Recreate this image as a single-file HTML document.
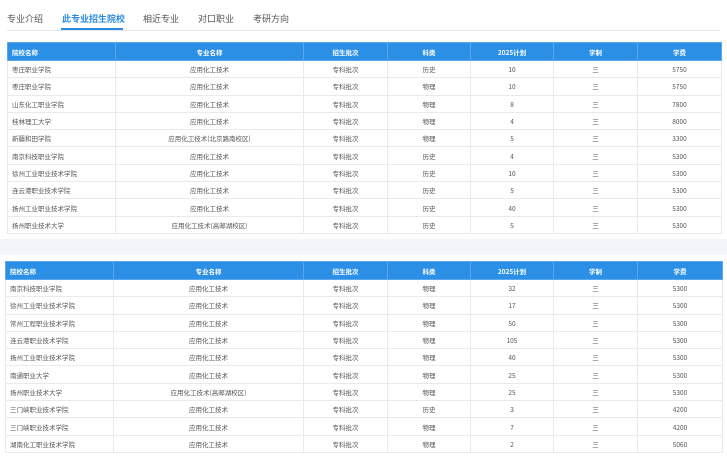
<!DOCTYPE html>
<html><head><meta charset="utf-8"><style>
body{margin:0;width:727px;height:457px;background:#f3f5fa;font-family:"Liberation Sans","Noto Sans CJK SC",sans-serif;position:relative;overflow:hidden}
.card{position:absolute;background:#fff}
.tabs{position:absolute;top:9px;left:0;height:21px;width:727px;font-size:9px;color:#555}
.tabs span{position:absolute;top:3px}
.tabs .act{color:#2a8be0;font-weight:bold}
.uline{position:absolute;left:61px;top:28px;width:62px;height:2px;background:#2a8be0}
.hline{position:absolute;left:7px;top:30px;width:713px;height:1px;background:#e6e8ee}
table{position:absolute;border-collapse:collapse;font-size:6.5px;color:#555;table-layout:fixed;font-family:"Noto Sans CJK SC",sans-serif}
th{background:#2b8fe6;color:#fff;font-weight:bold;height:17px;padding:0;border:1px solid #5aa7ee;vertical-align:middle}
td{height:16.3px;padding:0;border:1px solid #e8eaee;text-align:center;vertical-align:middle;white-space:nowrap}
th:first-child,td:first-child{text-align:left;padding-left:4px}
</style></head><body>
<div class="card" style="left:0;top:0;width:727px;height:239px"></div>
<div class="card" style="left:0;top:255px;width:727px;height:202px"></div>
<div class="tabs"><span style="left:7px">专业介绍</span><span class="act" style="left:62px">此专业招生院校</span><span style="left:143px">相近专业</span><span style="left:198px">对口职业</span><span style="left:253px">考研方向</span></div>
<div class="uline"></div><div class="hline"></div>
<table style="left:7px;top:42px;width:714px">
<colgroup><col style="width:108px"><col style="width:188px"><col style="width:84px"><col style="width:83px"><col style="width:83px"><col style="width:84px"><col style="width:84px"></colgroup>
<tr><th>院校名称</th><th>专业名称</th><th>招生批次</th><th>科类</th><th>2025计划</th><th>学制</th><th>学费</th></tr>
<tr><td>枣庄职业学院</td><td>应用化工技术</td><td>专科批次</td><td>历史</td><td>10</td><td>三</td><td>5750</td></tr>
<tr><td>枣庄职业学院</td><td>应用化工技术</td><td>专科批次</td><td>物理</td><td>10</td><td>三</td><td>5750</td></tr>
<tr><td>山东化工职业学院</td><td>应用化工技术</td><td>专科批次</td><td>物理</td><td>8</td><td>三</td><td>7800</td></tr>
<tr><td>桂林理工大学</td><td>应用化工技术</td><td>专科批次</td><td>物理</td><td>4</td><td>三</td><td>8000</td></tr>
<tr><td>新疆和田学院</td><td>应用化工技术(北京路南校区)</td><td>专科批次</td><td>物理</td><td>5</td><td>三</td><td>3300</td></tr>
<tr><td>南京科技职业学院</td><td>应用化工技术</td><td>专科批次</td><td>历史</td><td>4</td><td>三</td><td>5300</td></tr>
<tr><td>徐州工业职业技术学院</td><td>应用化工技术</td><td>专科批次</td><td>历史</td><td>10</td><td>三</td><td>5300</td></tr>
<tr><td>连云港职业技术学院</td><td>应用化工技术</td><td>专科批次</td><td>历史</td><td>5</td><td>三</td><td>5300</td></tr>
<tr><td>扬州工业职业技术学院</td><td>应用化工技术</td><td>专科批次</td><td>历史</td><td>40</td><td>三</td><td>5300</td></tr>
<tr><td>扬州职业技术大学</td><td>应用化工技术(高邮湖校区)</td><td>专科批次</td><td>历史</td><td>5</td><td>三</td><td>5300</td></tr>
</table>
<table style="left:5px;top:261px;width:717px">
<colgroup><col style="width:108px"><col style="width:190px"><col style="width:84px"><col style="width:83px"><col style="width:83px"><col style="width:84px"><col style="width:85px"></colgroup>
<tr><th>院校名称</th><th>专业名称</th><th>招生批次</th><th>科类</th><th>2025计划</th><th>学制</th><th>学费</th></tr>
<tr><td>南京科技职业学院</td><td>应用化工技术</td><td>专科批次</td><td>物理</td><td>32</td><td>三</td><td>5300</td></tr>
<tr><td>徐州工业职业技术学院</td><td>应用化工技术</td><td>专科批次</td><td>物理</td><td>17</td><td>三</td><td>5300</td></tr>
<tr><td>常州工程职业技术学院</td><td>应用化工技术</td><td>专科批次</td><td>物理</td><td>50</td><td>三</td><td>5300</td></tr>
<tr><td>连云港职业技术学院</td><td>应用化工技术</td><td>专科批次</td><td>物理</td><td>105</td><td>三</td><td>5300</td></tr>
<tr><td>扬州工业职业技术学院</td><td>应用化工技术</td><td>专科批次</td><td>物理</td><td>40</td><td>三</td><td>5300</td></tr>
<tr><td>南通职业大学</td><td>应用化工技术</td><td>专科批次</td><td>物理</td><td>25</td><td>三</td><td>5300</td></tr>
<tr><td>扬州职业技术大学</td><td>应用化工技术(高邮湖校区)</td><td>专科批次</td><td>物理</td><td>25</td><td>三</td><td>5300</td></tr>
<tr><td>三门峡职业技术学院</td><td>应用化工技术</td><td>专科批次</td><td>历史</td><td>3</td><td>三</td><td>4200</td></tr>
<tr><td>三门峡职业技术学院</td><td>应用化工技术</td><td>专科批次</td><td>物理</td><td>7</td><td>三</td><td>4200</td></tr>
<tr><td>湖南化工职业技术学院</td><td>应用化工技术</td><td>专科批次</td><td>物理</td><td>2</td><td>三</td><td>5060</td></tr>
</table>
</body></html>
